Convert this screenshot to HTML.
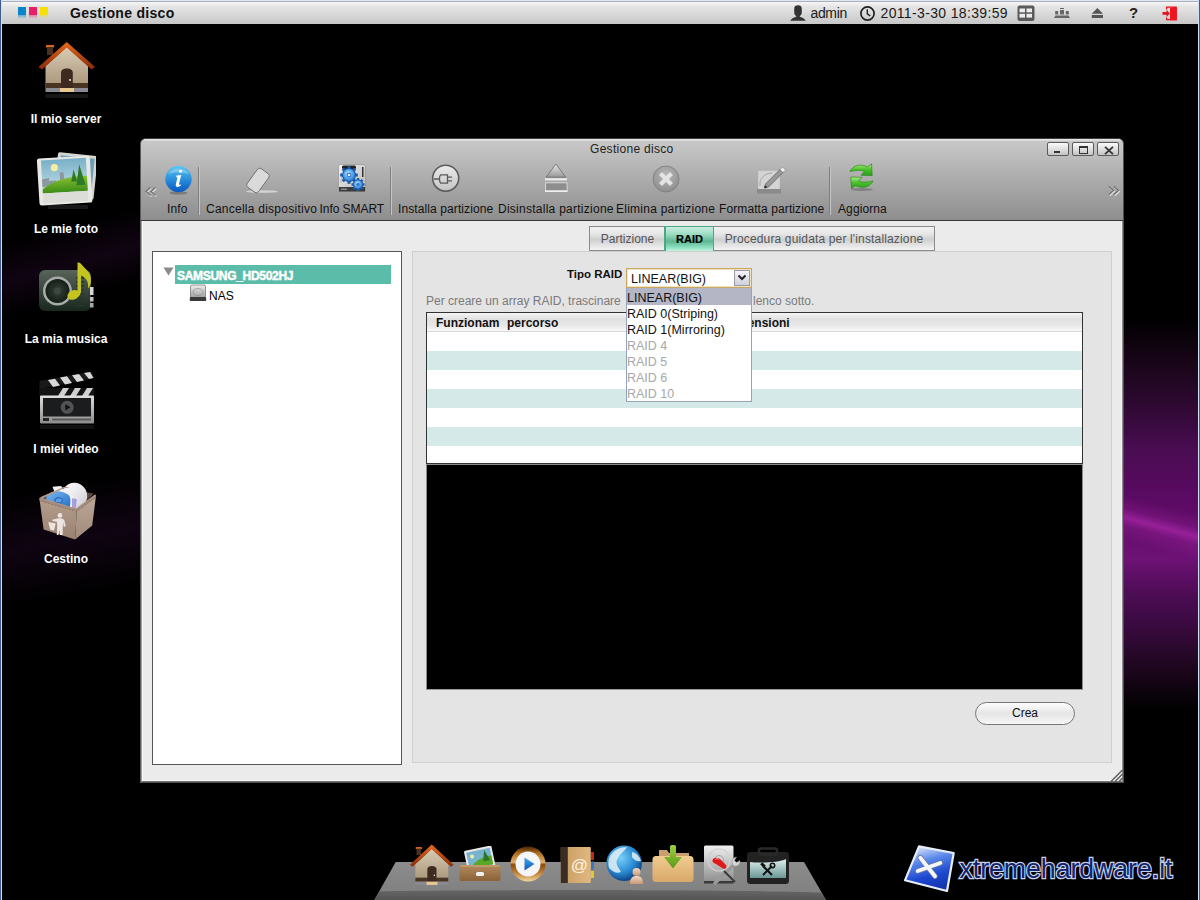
<!DOCTYPE html>
<html><head><meta charset="utf-8">
<style>
*{margin:0;padding:0;box-sizing:border-box}
html,body{width:1200px;height:900px;overflow:hidden;background:#000;font-family:"Liberation Sans",sans-serif}
.a{position:absolute}
#bg{left:0;top:0;width:1200px;height:900px;background:#000}
#frameL{left:0;top:0;width:1px;height:900px;background:#3b5d8f}
#frameL2{left:1px;top:0;width:1px;height:900px;background:#cfe0f3}
#frameR{left:1199px;top:0;width:1px;height:900px;background:#3b5d8f}
#frameR2{left:1198px;top:0;width:1px;height:900px;background:#cfe0f3}
#topbar{left:2px;top:0;width:1196px;height:24px;background:linear-gradient(#dfe7f2 0,#dfe7f2 1px,#a9b0ba 1px,#a9b0ba 2px,#f6f6f6 2px,#e4e4e4 7px,#d2d2d2 18px,#c6c6c6 24px)}
#topline{left:2px;top:1px;width:1196px;height:1px;background:#b8bcc4}
.lbl{color:#fff;font-weight:bold;font-size:12px;text-align:center;width:132px;left:0}
.wbtn{width:22px;height:14px;border:1px solid #5a5a5a;border-radius:2px;background:linear-gradient(#fafafa,#e0e0e0 50%,#c4c4c4)}
.sep{top:167px;height:48px;background:#7e7e7e;border-right:1px solid #c6c6c6;width:2px}
.trow{left:427px;width:655px;height:19px;background:#d5e9e9}
.dd{left:627px;font-size:12.5px;white-space:nowrap}
.tb{font-size:12px;color:#111;white-space:nowrap;top:202px !important;letter-spacing:0.1px}
</style></head><body>
<div class="a" id="bg"></div>
<div class="a" style="left:1123px;top:300px;width:75px;height:440px;background:linear-gradient(#000 0,#000 16px,#1c061c 70px,#360a3c 120px,#4a0c52 150px,#580a60 190px,#620c6a 222px,#6e1276 258px,#5c0e64 278px,#4c0c54 295px,#360a3c 330px,#1c061c 370px,#000 410px)"></div>
<div class="a" style="left:1112px;top:492px;width:110px;height:44px;transform:rotate(15deg);transform-origin:0 50%;background:linear-gradient(rgba(160,36,160,0) 0,rgba(160,36,160,0.25) 30%,rgba(172,40,170,0.7) 50%,rgba(160,36,160,0.3) 68%,rgba(160,36,160,0) 100%)"></div>
<div class="a" style="left:2px;top:180px;width:140px;height:140px;background:linear-gradient(165deg,rgba(40,10,40,0) 35%,rgba(40,10,45,0.4) 58%,rgba(40,10,40,0) 78%)"></div>
<div class="a" style="left:2px;top:480px;width:140px;height:120px;background:linear-gradient(170deg,rgba(30,8,30,0) 10%,rgba(30,8,35,0.5) 50%,rgba(30,8,30,0) 90%)"></div>

<div class="a" id="topbar"></div>
<div class="a" id="frameL"></div><div class="a" id="frameL2"></div>
<div class="a" id="frameR"></div><div class="a" id="frameR2"></div>

<!-- top bar -->
<div class="a" style="left:18px;top:7px;width:8px;height:8px;background:#0a86c8"></div>
<div class="a" style="left:29px;top:7px;width:8px;height:8px;background:#e8206a"></div>
<div class="a" style="left:40px;top:7px;width:8px;height:8px;background:#f6e000"></div>
<div class="a" style="left:18px;top:15px;width:8px;height:4px;background:linear-gradient(rgba(10,134,200,0.55),rgba(10,134,200,0))"></div>
<div class="a" style="left:29px;top:15px;width:8px;height:4px;background:linear-gradient(rgba(232,32,106,0.45),rgba(232,32,106,0))"></div>
<div class="a" style="left:40px;top:15px;width:8px;height:4px;background:linear-gradient(rgba(246,224,0,0.45),rgba(246,224,0,0))"></div>
<div class="a" style="left:70px;top:5px;font-size:14px;font-weight:bold;letter-spacing:0.3px;color:#111">Gestione disco</div>
<svg class="a" style="left:789px;top:4px" width="18" height="18" viewBox="0 0 18 18"><path d="M5.2 5 C5.2 2.2 6.6 1.2 9 1.2 C11.4 1.2 12.8 2.2 12.8 5 L12.8 8.5 C12.8 10.5 11.6 11.6 10.8 12 L10.8 12.8 C13.5 13.6 15.8 14.8 16.8 16.8 L1.2 16.8 C2.2 14.8 4.5 13.6 7.2 12.8 L7.2 12 C6.4 11.6 5.2 10.5 5.2 8.5 Z" fill="#333"/></svg>
<div class="a" style="left:810.5px;top:5px;font-size:14px;letter-spacing:-0.35px;color:#1a1a1a">admin</div>
<svg class="a" style="left:859px;top:5px" width="17" height="17" viewBox="0 0 17 17"><circle cx="8.5" cy="8.5" r="6.6" fill="none" stroke="#222" stroke-width="1.7"/><path d="M8.3 4.2 L8.3 8.8 L11.3 11" fill="none" stroke="#222" stroke-width="1.4"/></svg>
<div class="a" style="left:880.5px;top:5px;font-size:14px;color:#1a1a1a;letter-spacing:0.35px">2011-3-30 18:39:59</div>
<svg class="a" style="left:1017px;top:5px" width="18" height="17" viewBox="0 0 18 17"><rect x="0.5" y="0.5" width="17" height="15.5" rx="2" fill="#5a5a5a"/><rect x="2.5" y="3.5" width="5.5" height="3.8" fill="#ececec"/><rect x="9.5" y="3.5" width="5.5" height="3.8" fill="#ececec"/><rect x="2.5" y="8.8" width="5.5" height="3.8" fill="#ececec"/><rect x="9.5" y="8.8" width="5.5" height="3.8" fill="#ececec"/></svg>
<svg class="a" style="left:1053px;top:7px" width="18" height="12" viewBox="0 0 18 12"><rect x="7" y="1" width="4" height="1" fill="#666"/><rect x="7" y="3" width="4" height="4.5" fill="#666"/><rect x="2.2" y="4" width="3" height="3.5" fill="#666"/><rect x="12.8" y="4" width="3" height="3.5" fill="#666"/><path d="M2.5 8.5 L15.5 8.5 L17 11 L1 11 Z" fill="#666"/></svg>
<svg class="a" style="left:1091px;top:7px" width="13" height="12" viewBox="0 0 13 12"><path d="M6.4 1 L12 6.8 L0.8 6.8 Z" fill="#555"/><rect x="0.8" y="8" width="11.2" height="3" fill="#555"/></svg>
<div class="a" style="left:1129px;top:4px;font-size:15px;font-weight:bold;color:#222">?</div>
<svg class="a" style="left:1162px;top:6px" width="16" height="15" viewBox="0 0 16 15"><path d="M4 0.5 L14.8 0.5 L14.8 14.3 L4 14.3 L4 11.5 L5.2 11.5 L5.2 13 L8 13 L8 4 L12 1.8 L5.2 1.8 L5.2 3.5 L4 3.5 Z" fill="#e3141c"/><rect x="8" y="1.5" width="6.8" height="12.8" fill="#ee1520"/><path d="M0.5 6 L4.5 6 L4.5 3.8 L7.8 7.4 L4.5 11 L4.5 8.8 L0.5 8.8 Z" fill="#e3141c"/></svg>

<!-- window -->
<div class="a" id="win" style="left:140px;top:138px;width:984px;height:645px;background:#ebebeb;border:1px solid #505050;border-left-color:#5a5a5a;border-top-color:#3a3a3a;border-radius:6px 6px 0 0;overflow:hidden;box-shadow:inset 1px 0 #a0a0a0,inset -1px 0 #8a8a8a,inset 0 -1px #747474,inset 2px 0 #f8f8f8,inset -2px 0 #f4f4f4,inset 0 -2px #f8f8f8">
  <div class="a" style="left:0;top:0;width:982px;height:82px;background:linear-gradient(#e6e6e6 0,#e6e6e6 1px,#c8c8c8 2px,#8e8e8e 100%);border-bottom:1px solid #3a3a3a"></div>
</div>
<div class="a" style="left:590px;top:142px;font-size:12px;color:#222;letter-spacing:0.3px">Gestione disco</div>


<!-- title buttons -->
<div class="a wbtn" style="left:1047px;top:142px"><div class="a" style="left:6px;top:8px;width:6px;height:2px;background:#333"></div></div>
<div class="a wbtn" style="left:1072px;top:142px"><div class="a" style="left:6px;top:2.5px;width:8.5px;height:8px;border:1.3px solid #333;border-top-width:2px"></div></div>
<div class="a wbtn" style="left:1097px;top:142px"><svg class="a" style="left:5.5px;top:2.5px" width="10" height="9" viewBox="0 0 10 9"><path d="M1 0.8 L9 8.2 M9 0.8 L1 8.2" stroke="#333" stroke-width="1.8"/></svg></div>
<!-- arrows -->
<svg class="a" style="left:144px;top:186px" width="14" height="11" viewBox="0 0 14 11"><path d="M6.5 1.5 L2 5.5 L6.5 9.5 M11.5 1.5 L7 5.5 L11.5 9.5" fill="none" stroke="#e8e8e8" stroke-width="1.4" transform="translate(0.7 0.9)"/><path d="M6.5 1.5 L2 5.5 L6.5 9.5 M11.5 1.5 L7 5.5 L11.5 9.5" fill="none" stroke="#6e6e6e" stroke-width="1.2"/></svg>
<svg class="a" style="left:1107px;top:185px" width="14" height="11" viewBox="0 0 14 11"><path d="M2 1.5 L6.5 5.5 L2 9.5 M7 1.5 L11.5 5.5 L7 9.5" fill="none" stroke="#e8e8e8" stroke-width="1.4" transform="translate(0.7 0.9)"/><path d="M2 1.5 L6.5 5.5 L2 9.5 M7 1.5 L11.5 5.5 L7 9.5" fill="none" stroke="#6e6e6e" stroke-width="1.2"/></svg>
<!-- separators -->
<div class="a sep" style="left:198px"></div><div class="a sep" style="left:390px"></div><div class="a sep" style="left:829px"></div>
<!-- toolbar icons -->
<svg class="a" style="left:163px;top:164px" width="32" height="32" viewBox="0 0 32 32">
<defs><linearGradient id="ib" x1="0" y1="0" x2="0" y2="1"><stop offset="0" stop-color="#60c8f4"/><stop offset="0.5" stop-color="#2a90dc"/><stop offset="1" stop-color="#0a58c0"/></linearGradient></defs>
<ellipse cx="15.5" cy="29" rx="9" ry="1.6" fill="#555" opacity="0.5"/>
<circle cx="15.5" cy="15" r="13.2" fill="url(#ib)"/><path d="M5 10 C8 3 23 3 26 10 C20 8 11 8 5 10Z" fill="#fff" opacity="0.25"/>
<circle cx="17.5" cy="7.2" r="1.5" fill="#fff"/><path d="M13.5 11.5 L18.2 11 L16 20 C15.8 21 16.6 21.2 18 20 L17.6 21.8 C15 23.6 12.2 23.2 12.8 20.5 L14.5 13.2 L13.2 13.2 Z" fill="#fff"/>
</svg>
<svg class="a" style="left:242px;top:162px" width="40" height="34" viewBox="0 0 40 34">
<ellipse cx="20" cy="29.5" rx="16" ry="1.3" fill="#e8e8e8" opacity="0.7"/>
<rect x="9" y="7" width="14" height="23" rx="3" transform="rotate(36 16 18.5)" fill="#dadada" stroke="#707070" stroke-width="0.9"/>
</svg>
<svg class="a" style="left:337px;top:163px" width="30" height="30" viewBox="0 0 30 30">
<defs><linearGradient id="sm" x1="0" y1="0" x2="1" y2="1"><stop offset="0" stop-color="#f4f4f4"/><stop offset="1" stop-color="#b4b4b4"/></linearGradient>
<radialGradient id="gb" cx="0.45" cy="0.4" r="0.6"><stop offset="0" stop-color="#e8f6ff"/><stop offset="0.45" stop-color="#68b8f8"/><stop offset="1" stop-color="#2a78d0"/></radialGradient></defs>
<rect x="1.5" y="1.5" width="27" height="27" rx="2" fill="url(#sm)" stroke="#8a8a8a" stroke-width="0.6"/><path d="M4 20 C3 12 9 6 17 6" fill="none" stroke="#999" stroke-width="0.6"/><rect x="5" y="2.5" width="14" height="3.5" rx="1.5" fill="#222"/><rect x="2" y="24" width="26" height="4.5" fill="#3c3c3c"/><rect x="4" y="25.5" width="6" height="1.5" fill="#8a8a8a"/>
<rect x="25" y="4" width="1.5" height="10" fill="#333"/>
<g transform="translate(12 12)"><g fill="#1c5aa8"><circle r="7"/><rect x="-1.5" y="-8.8" width="3" height="17.6"/><rect x="-8.8" y="-1.5" width="17.6" height="3"/><rect x="-1.5" y="-8.8" width="3" height="17.6" transform="rotate(45)"/><rect x="-1.5" y="-8.8" width="3" height="17.6" transform="rotate(-45)"/></g><circle r="6" fill="url(#gb)"/><circle r="2.4" fill="#3a78c0"/><circle r="1.3" fill="#d8ecfa"/></g>
<g transform="translate(21 21.5)"><g fill="#1c5aa8"><circle r="5.2"/><rect x="-1.2" y="-6.5" width="2.4" height="13"/><rect x="-6.5" y="-1.2" width="13" height="2.4"/><rect x="-1.2" y="-6.5" width="2.4" height="13" transform="rotate(45)"/><rect x="-1.2" y="-6.5" width="2.4" height="13" transform="rotate(-45)"/></g><circle r="4.3" fill="url(#gb)"/><circle r="1.7" fill="#3a78c0"/></g>
</svg>
<svg class="a" style="left:430px;top:162px" width="32" height="32" viewBox="0 0 32 32">
<defs><linearGradient id="pl" x1="0" y1="0" x2="0" y2="1"><stop offset="0" stop-color="#ececec"/><stop offset="1" stop-color="#c4c4c4"/></linearGradient></defs>
<circle cx="15.7" cy="16.2" r="13" fill="url(#pl)" stroke="#5c5c5c" stroke-width="1.6"/>
<path d="M4 17 L10 17 M17.5 12.8 L10.8 12.8 C9 14 9 20 10.8 21.2 L17.5 21.2 Z M17.5 15.2 L22 15.2 M17.5 18.8 L22 18.8" fill="none" stroke="#5a5a5a" stroke-width="1.3"/>
</svg>
<svg class="a" style="left:543px;top:162px" width="27" height="32" viewBox="0 0 27 32">
<defs><linearGradient id="ej" x1="0" y1="0" x2="0" y2="1"><stop offset="0" stop-color="#e8e8e8"/><stop offset="1" stop-color="#989898"/></linearGradient></defs>
<path d="M12.8 2 L22.8 15.2 L3.2 15.2 Z" fill="url(#ej)" stroke="#6a6a6a" stroke-width="0.8"/>
<rect x="2" y="16.2" width="22" height="2.2" fill="#ececec"/>
<rect x="2.5" y="20.8" width="21.6" height="8" fill="#8e8e8e" stroke="#dedede" stroke-width="0.9"/><rect x="2" y="28.6" width="22.5" height="1.4" fill="#efefef"/>
</svg>
<svg class="a" style="left:651px;top:164px" width="30" height="30" viewBox="0 0 30 30">
<defs><radialGradient id="xg" cx="0.5" cy="0.35" r="0.65"><stop offset="0" stop-color="#b8b8b8"/><stop offset="1" stop-color="#8e8e8e"/></radialGradient></defs>
<circle cx="15" cy="15" r="13" fill="url(#xg)" stroke="#7c7c7c" stroke-width="0.8"/>
<path d="M9.5 9.5 L20.5 20.5 M20.5 9.5 L9.5 20.5" stroke="#e4e4e4" stroke-width="4.2"/>
</svg>
<svg class="a" style="left:755px;top:164px" width="34" height="32" viewBox="0 0 34 32">
<rect x="3" y="6.5" width="22" height="19" fill="#d4d4d4" stroke="#b0b0b0" stroke-width="0.5"/><path d="M5 22 C4 14 10 9 17 9" fill="none" stroke="#8a8a8a" stroke-width="0.6"/>
<rect x="2" y="25" width="24" height="4.5" fill="#8a8a8a"/>
<path d="M9.5 24 L10.5 20 L25 5.5 L28 8.5 L13.5 23 Z" fill="#9a9a9a" stroke="#555" stroke-width="0.7"/><path d="M25 5.5 L27.5 3 L30.5 6 L28 8.5 Z" fill="#eeeeee" stroke="#777" stroke-width="0.5"/><circle cx="10.5" cy="23" r="1.3" fill="#333"/>
</svg>
<svg class="a" style="left:847px;top:162px" width="30" height="31" viewBox="0 0 30 31">
<defs><linearGradient id="gr" x1="0" y1="0" x2="0" y2="1"><stop offset="0" stop-color="#a8f088"/><stop offset="0.5" stop-color="#48c028"/><stop offset="1" stop-color="#28a018"/></linearGradient></defs>
<ellipse cx="15" cy="27.5" rx="11" ry="1.5" fill="#555" opacity="0.45"/>
<path d="M3 9.5 C6 3 14 1.5 20.5 5 L24.5 1.8 L25.2 13.5 L14 13.2 L17.5 9.5 C13 7.5 8 8.5 3 9.5 Z" fill="url(#gr)" stroke="#2a8a18" stroke-width="0.7"/>
<path d="M26 19 C23 25.5 15 27 8.5 23.5 L4.5 26.7 L3.8 15 L15 15.3 L11.5 19 C16 21 21 20 26 19 Z" fill="url(#gr)" stroke="#2a8a18" stroke-width="0.7"/>
</svg>

<div class="a tb" style="left:167px;top:201px">Info</div>
<div class="a tb" style="left:206px;top:201px;letter-spacing:0.25px">Cancella dispositivo</div>
<div class="a tb" style="left:319.5px;top:201px;letter-spacing:-0.05px">Info SMART</div>
<div class="a tb" style="left:398px;top:201px">Installa partizione</div>
<div class="a tb" style="left:498px;top:201px;letter-spacing:0.26px">Disinstalla partizione</div>
<div class="a tb" style="left:616px;top:201px;letter-spacing:0.25px">Elimina partizione</div>
<div class="a tb" style="left:719px;top:201px">Formatta partizione</div>
<div class="a tb" style="left:838px;top:201px">Aggiorna</div>

<!-- tree panel -->
<div class="a" style="left:152px;top:251px;width:250px;height:514px;background:#fff;border:1px solid #555"></div>
<div class="a" style="left:175px;top:265px;width:216px;height:19px;background:#5cbcaa"></div>
<div class="a" style="left:177px;top:268.5px;font-size:12px;font-weight:bold;color:#fff;letter-spacing:-0.3px;-webkit-text-stroke:0.45px #fff">SAMSUNG_HD502HJ</div>
<div class="a" style="left:209px;top:289px;font-size:12px;color:#000">NAS</div>


<svg class="a" style="left:163px;top:267px" width="11" height="9" viewBox="0 0 11 9"><path d="M0.5 0.5 L10.5 0.5 L5.5 8.5 Z" fill="#8a8a8a"/></svg>
<svg class="a" style="left:189px;top:284px" width="18" height="18" viewBox="0 0 18 18"><defs><linearGradient id="hd" x1="0" y1="0" x2="0" y2="1"><stop offset="0" stop-color="#f0f0f0"/><stop offset="1" stop-color="#a0a0a0"/></linearGradient></defs><rect x="1.5" y="1" width="15" height="12.5" rx="1.5" fill="url(#hd)" stroke="#6a6a6a" stroke-width="0.7"/><ellipse cx="9" cy="8" rx="5" ry="3.5" fill="none" stroke="#888" stroke-width="0.6"/><rect x="0.8" y="13" width="16.4" height="4" rx="0.8" fill="#3a3a3a"/></svg>

<!-- right panel -->
<div class="a" style="left:412px;top:251px;width:700px;height:512px;background:#e4e4e4;border:1px solid #d0d0d0"></div>


<!-- tabs -->
<div class="a" style="left:589px;top:226px;width:76px;height:25px;border:1px solid #8a8a8a;border-right:none;background:linear-gradient(#f2f2f2 0,#e6e6e6 30%,#cfcfcf 55%,#e8e8e8 85%,#f4f4f4);font-size:12px;color:#555;text-align:center;line-height:25px;letter-spacing:0px">Partizione</div>
<div class="a" style="left:664px;top:226px;width:51px;height:25px;border:2px solid #4aa888;border-top-width:1.5px;border-bottom:none;background:linear-gradient(#c8eee0 0,#9cdcc4 30%,#5cb894 60%,#8ee0c0 85%,#c0f4e0);font-size:11px;font-weight:bold;color:#000;text-align:center;line-height:25px;-webkit-text-stroke:0.2px #000">RAID</div>
<div class="a" style="left:714px;top:226px;width:221px;height:25px;border:1px solid #8a8a8a;border-left:none;background:linear-gradient(#f2f2f2 0,#e6e6e6 30%,#cfcfcf 55%,#e8e8e8 85%,#f4f4f4);font-size:12px;color:#555;text-align:center;line-height:25px;letter-spacing:0.15px">Procedura guidata per l'installazione</div>

<!-- Tipo RAID / select -->
<div class="a" style="left:567px;top:268px;font-size:11.5px;font-weight:bold;color:#111">Tipo RAID</div>
<div class="a" style="left:426px;top:294px;font-size:12px;color:#7a7a7a">Per creare un array RAID, trascinare</div>
<div class="a" style="left:753px;top:294px;font-size:12px;color:#7a7a7a">lenco sotto.</div>

<!-- table -->
<div class="a" style="left:426px;top:312px;width:657px;height:152px;background:#fff;border:1px solid #333"></div>

<div class="a" style="left:427px;top:313px;width:655px;height:19px;background:linear-gradient(#f4f4f4 0,#e0e0e0 35%,#e8e8e8 70%,#fafafa);border-bottom:1px solid #d8d8d8"></div>
<div class="a" style="left:436px;top:316px;font-size:12px;font-weight:bold;color:#111">Funzionam</div>
<div class="a" style="left:507px;top:316px;font-size:12px;font-weight:bold;color:#111">percorso</div>
<div class="a" style="left:725px;top:316px;font-size:12px;font-weight:bold;color:#111">Dimensioni</div>
<div class="a trow" style="top:351px"></div><div class="a trow" style="top:389px"></div><div class="a trow" style="top:427px"></div>
<div class="a" style="left:426px;top:464px;width:657px;height:226px;background:#000;border:1px solid #8c8c8c;border-bottom-color:#9a9a9a"></div>


<!-- select + dropdown -->
<div class="a" style="left:626px;top:268px;width:126px;height:20px;border:1px solid #c8a860;box-shadow:inset 0 0 0 1px #f0e4c0;background:#fff"></div>
<div class="a" style="left:631px;top:272px;font-size:12.5px;color:#111">LINEAR(BIG)</div>
<div class="a" style="left:734px;top:270px;width:16px;height:16px;border:1px solid #9a9aa8;background:linear-gradient(#f4f4fa,#d0d0dc)"></div>
<svg class="a" style="left:737px;top:274px" width="10" height="8" viewBox="0 0 10 8"><path d="M1.5 1.5 L5 5 L8.5 1.5" fill="none" stroke="#222" stroke-width="2"/></svg>
<div class="a" style="left:626px;top:288px;width:126px;height:114px;background:#fff;border:1px solid #94a4bc;border-top:none"></div>
<div class="a" style="left:627px;top:288px;width:124px;height:17px;background:#b4b6c6"></div>
<div class="a dd" style="top:291px;color:#111">LINEAR(BIG)</div>
<div class="a dd" style="top:307px;color:#111">RAID 0(Striping)</div>
<div class="a dd" style="top:323px;color:#111">RAID 1(Mirroring)</div>
<div class="a dd" style="top:339px;color:#a8a8a8">RAID 4</div>
<div class="a dd" style="top:355px;color:#a8a8a8">RAID 5</div>
<div class="a dd" style="top:371px;color:#a8a8a8">RAID 6</div>
<div class="a dd" style="top:387px;color:#a8a8a8">RAID 10</div>
<!-- resize grip -->
<svg class="a" style="left:1110px;top:769px" width="13" height="13" viewBox="0 0 13 13"><path d="M12.5 1 L1 12.5 M12.5 5 L5 12.5 M12.5 9 L9 12.5" stroke="#5a5a5a" stroke-width="1.4"/></svg>
<!-- Crea -->
<div class="a" style="left:975px;top:702px;width:100px;height:23px;border:1px solid #777;border-radius:12px;background:linear-gradient(#fdfdfd,#e6e6e6 50%,#f6f6f6);font-size:12px;text-align:center;line-height:21px;color:#111">Crea</div>


<!-- desktop icons -->
<svg class="a" style="left:36px;top:40px" width="62" height="62" viewBox="0 0 62 62">
<defs><linearGradient id="hw" x1="0" y1="0" x2="0" y2="1"><stop offset="0" stop-color="#d8cbb4"/><stop offset="1" stop-color="#a89478"/></linearGradient>
<linearGradient id="hr" x1="0" y1="0" x2="0" y2="1"><stop offset="0" stop-color="#e86a1c"/><stop offset="1" stop-color="#8a2a08"/></linearGradient></defs>
<rect x="10" y="5" width="8" height="2.5" fill="#d8641e"/><rect x="11" y="7" width="6" height="8" fill="#4a3022"/>
<g id="houseg"><path d="M9.5 26 L30.7 7 L52 26 L52 48 L9.5 48 Z" fill="url(#hw)"/>
<path d="M2.5 27 L30.7 2 L59 27 L55.5 29.5 L30.7 7.5 L6 29.5 Z" fill="url(#hr)"/>
<rect x="9.5" y="43" width="42.5" height="5" fill="#4a3424"/><path d="M25 48 L25 32.5 C25 27 36.8 27 36.8 32.5 L36.8 48 Z" fill="#3e2a1e"/><circle cx="34" cy="40" r="0.9" fill="#fff"/><rect x="9.5" y="48" width="42.5" height="4" fill="#8a8a92"/><rect x="24" y="48" width="14" height="4" fill="#e8c890"/></g>
<rect x="9.5" y="54" width="42.5" height="4" fill="#1c1c1c" opacity="0.8"/>
</svg>
<svg class="a" style="left:36px;top:148px" width="60" height="62" viewBox="0 0 60 62">
<defs><linearGradient id="sky" x1="0" y1="0" x2="0" y2="1"><stop offset="0" stop-color="#78b0c8"/><stop offset="1" stop-color="#c8e0e8"/></linearGradient>
<linearGradient id="grs" x1="0" y1="0" x2="0" y2="1"><stop offset="0" stop-color="#88c030"/><stop offset="1" stop-color="#3c8c18"/></linearGradient></defs>
<g transform="rotate(6 40 26)"><rect x="20" y="6" width="40" height="44" rx="2" fill="#d4d4d0"/><rect x="23" y="9" width="34" height="30" fill="#6aa0b8"/></g>
<g transform="rotate(-3.5 30 30)"><rect x="2" y="9" width="53" height="47" rx="2.5" fill="#e8e8e4"/><rect x="6" y="11" width="45" height="33" fill="url(#sky)"/>
<circle cx="19" cy="19" r="3.6" fill="#f4eca0"/>
<path d="M6 30 L13 29 L13 32 L20 32 L20 34 L24 34 L24 24 L28 24 L28 35 L6 38 Z" fill="#8a98a0"/>
<path d="M6 40 C14 34 28 28 51 29 L51 44 L6 44 Z" fill="url(#grs)"/>
<path d="M44 17 L49 38 L40 38 Z" fill="#2c7a28"/><path d="M38 22 L41 34 L35 34 Z" fill="#2c7a28"/>
<rect x="6" y="44" width="45" height="10" fill="#dcdcd8"/></g>
<rect x="12" y="57" width="40" height="4" fill="#444" opacity="0.35"/>
</svg>
<svg class="a" style="left:36px;top:260px" width="60" height="56" viewBox="0 0 60 56">
<defs><linearGradient id="rad" x1="0" y1="0" x2="0" y2="1"><stop offset="0" stop-color="#58645a"/><stop offset="1" stop-color="#18281e"/></linearGradient>
<radialGradient id="spk"><stop offset="0" stop-color="#39443c"/><stop offset="1" stop-color="#141c16"/></radialGradient></defs>
<rect x="3" y="10" width="52" height="41" rx="6" fill="url(#rad)"/>
<circle cx="21.5" cy="31" r="14.5" fill="#a8aca8"/><circle cx="21.5" cy="31" r="12" fill="url(#spk)"/><circle cx="21.5" cy="31" r="3.4" fill="#3a4a3e"/>
<g fill="#2a342c"><rect x="40" y="17" width="8" height="1.5"/><rect x="40" y="21" width="8" height="1.5"/><rect x="40" y="25" width="8" height="1.5"/><rect x="40" y="29" width="8" height="1.5"/><rect x="40" y="33" width="8" height="1.5"/><rect x="40" y="37" width="8" height="1.5"/><rect x="40" y="41" width="8" height="1.5"/><rect x="40" y="45" width="8" height="1.5"/></g>
<rect x="54" y="27" width="3.5" height="8" fill="#d8d8d8"/><rect x="54" y="37" width="3.5" height="4.5" fill="#c0c0c0"/><rect x="54" y="43" width="3.5" height="4.5" fill="#a8a8a8"/>
<path d="M41.5 2.5 C44 2 45 3.5 46.5 5.5 C49 9 55 12 55 20 C55 25 53.5 27 52 28.5 C53 22 50 17.5 45 15.5 L45 31 C45 37 38 41 34 39.5 C30 38 31 33 35 31 C38 29.5 40 29.8 41.5 30.5 Z" fill="#c4c41e"/>
</svg>
<svg class="a" style="left:38px;top:370px" width="58" height="60" viewBox="0 0 58 60">
<defs><linearGradient id="vfr" x1="0" y1="0" x2="0" y2="1"><stop offset="0" stop-color="#e0e0e0"/><stop offset="1" stop-color="#8c8c8c"/></linearGradient></defs>
<path d="M1.5 11 L54 1.5 L56 8 L1.5 19 Z" fill="#1a1a1a"/>
<g fill="#d8d8d8"><path d="M10 10 L17 8.8 L22 15.5 L15 17 Z"/><path d="M22 7.5 L29 6.2 L34 13 L27 14.5 Z"/><path d="M34 5.3 L41 4 L46 10.5 L39 12 Z"/><path d="M46 3 L52 2 L55.5 8 L51 9 Z"/></g>
<rect x="1.5" y="18" width="54.5" height="8" fill="#141414"/>
<g fill="#d0d0d0"><path d="M20 26 L25 18 L31 18 L26 26 Z"/><path d="M32 26 L37 18 L43 18 L38 26 Z"/><path d="M44 26 L49 18 L55 18 L50 26 Z"/></g>
<rect x="2" y="25.5" width="54" height="28" rx="1" fill="url(#vfr)"/><rect x="5" y="28" width="48" height="18.5" fill="#1a1c1e"/>
<circle cx="29.2" cy="37.3" r="6.5" fill="#505254"/><path d="M27.3 34 L32.5 37.3 L27.3 40.6 Z" fill="#111"/>
<rect x="5" y="48" width="6" height="3" fill="#222"/><rect x="14" y="48.5" width="39" height="2" fill="#5a5a5a"/>
<rect x="2" y="55" width="54" height="4" fill="#2a2a2a" opacity="0.4"/>
</svg>
<svg class="a" style="left:30px;top:475px" width="70" height="70" viewBox="0 0 900 900">
<defs><linearGradient id="trf" x1="0" y1="0" x2="0" y2="1"><stop offset="0" stop-color="#b49c8c"/><stop offset="1" stop-color="#9a8272"/></linearGradient>
<linearGradient id="trr" x1="0" y1="0" x2="0" y2="1"><stop offset="0" stop-color="#bca898"/><stop offset="1" stop-color="#a08a7a"/></linearGradient>
<linearGradient id="dsk" x1="0" y1="0" x2="1" y2="1"><stop offset="0" stop-color="#ffffff"/><stop offset="0.5" stop-color="#e8e8ec"/><stop offset="1" stop-color="#c8c8d0"/></linearGradient>
<linearGradient id="bdsk" x1="0" y1="0" x2="1" y2="1"><stop offset="0" stop-color="#78b8f0"/><stop offset="1" stop-color="#2870c8"/></linearGradient></defs>
<path d="M150 300 L440 160 L820 240 L600 440 Z" fill="#5a4a42"/>
<ellipse cx="570" cy="270" rx="165" ry="170" fill="url(#dsk)"/>
<path d="M290 150 L400 140 L470 240 L330 260 Z" fill="#f4f4f4"/>
<path d="M420 200 C520 190 580 260 590 420 L470 430 C460 330 420 250 420 200 Z" fill="#f0f0f4"/>
<path d="M540 300 L600 310 L590 430 L540 430 Z" fill="#8a7ad0" opacity="0.7"/>
<path d="M210 290 C240 200 400 180 500 260 C530 290 520 380 510 420 L250 360 C220 340 200 320 210 290 Z" fill="url(#bdsk)"/>
<path d="M320 330 C330 280 400 280 420 320 L400 360 L330 350 Z" fill="#5aa0e8" stroke="#2a68b8" stroke-width="14"/>
<path d="M120 300 L150 275 L440 150 L520 160 L440 170 L165 300 L590 430 L820 260 L845 250 L845 290 L600 470 L125 330 Z" fill="#b09a8a"/>
<path d="M125 330 L600 470 L580 830 L175 700 Z" fill="url(#trf)"/>
<path d="M600 470 L845 290 L800 650 L580 830 Z" fill="url(#trr)"/>
<path d="M120 300 L595 440 L845 255 L845 290 L600 470 L125 330 Z" fill="#a28a7a"/>
<g fill="#ece4e0"><circle cx="385" cy="520" r="30"/><path d="M350 560 C380 550 420 555 440 575 L460 660 L435 665 L425 610 L420 700 L420 770 L385 770 L380 700 L365 770 L345 770 L350 640 L345 600 L290 590 L285 575 Z"/><path d="M235 605 L330 625 L310 715 L260 705 Z"/></g>
</svg>

<!-- desktop labels -->
<div class="a lbl" style="top:112px">Il mio server</div>
<div class="a lbl" style="top:222px">Le mie foto</div>
<div class="a lbl" style="top:332px">La mia musica</div>
<div class="a lbl" style="top:442px">I miei video</div>
<div class="a lbl" style="top:552px">Cestino</div>


<!-- dock -->
<svg class="a" style="left:370px;top:855px" width="460" height="45" viewBox="0 0 460 45">
<defs><linearGradient id="shelf" x1="0" y1="0" x2="0" y2="1"><stop offset="0" stop-color="#8c8c8c"/><stop offset="1" stop-color="#7e7e7e"/></linearGradient>
<linearGradient id="front" x1="0" y1="0" x2="0" y2="1"><stop offset="0" stop-color="#666"/><stop offset="1" stop-color="#555"/></linearGradient></defs>
<path d="M25.7 7 L434 7 L456 45 L4.3 45 Z" fill="url(#shelf)"/>
<path d="M9.5 36.3 C80 34.5 380 34.5 451 37.7 L456 45 L4.3 45 Z" fill="url(#front)"/>
</svg>
<svg class="a" style="left:408px;top:843px" width="48" height="50" viewBox="0 0 62 62" preserveAspectRatio="none">
<rect x="10" y="5" width="8" height="2.5" fill="#d8641e"/><rect x="11" y="7" width="6" height="8" fill="#4a3022"/><use href="#houseg"/>
</svg>

<svg class="a" style="left:456px;top:846px" width="48" height="38" viewBox="0 0 48 38">
<defs><linearGradient id="drw" x1="0" y1="0" x2="0" y2="1"><stop offset="0" stop-color="#b48a5c"/><stop offset="1" stop-color="#8a6238"/></linearGradient></defs>
<g transform="rotate(-12 24 14)"><rect x="10" y="2" width="28" height="22" rx="1.5" fill="#e8e8e8"/><rect x="12" y="4" width="24" height="17" fill="#78b4d0"/><path d="M12 21 C18 14 28 11 36 12 L36 21 Z" fill="#58a828"/><path d="M30 5 L34 16 L27 16 Z" fill="#2c7428"/><circle cx="17" cy="9" r="2" fill="#f0eca0"/></g>
<path d="M3.5 19 L44.5 19 L44.5 33 C44.5 34 44 35 42.5 35 L5.5 35 C4 35 3.5 34 3.5 33 Z" fill="url(#drw)"/>
<path d="M3.5 19 L44.5 19 L42 21 L6 21 Z" fill="#c09a6a"/>
<rect x="20" y="26" width="8" height="4" rx="1.5" fill="#f2f2f2"/>
</svg>
<svg class="a" style="left:509px;top:845px" width="38" height="38" viewBox="0 0 38 38">
<defs><linearGradient id="gold" x1="0" y1="0" x2="0" y2="1"><stop offset="0" stop-color="#4a2404"/><stop offset="0.2" stop-color="#b07020"/><stop offset="0.45" stop-color="#e0b070"/><stop offset="0.52" stop-color="#8a4a08"/><stop offset="0.8" stop-color="#c89048"/><stop offset="1" stop-color="#f0d8a0"/></linearGradient>
<linearGradient id="plb" x1="0" y1="0" x2="0" y2="1"><stop offset="0" stop-color="#4aa8f0"/><stop offset="1" stop-color="#0a58b0"/></linearGradient></defs>
<circle cx="19" cy="19" r="17.5" fill="url(#gold)"/><circle cx="19" cy="19" r="12.5" fill="#f4f6f8"/><path d="M15.5 12.5 L25.5 19 L15.5 25.5 Z" fill="url(#plb)"/>
</svg>
<svg class="a" style="left:560px;top:846px" width="36" height="38" viewBox="0 0 36 38">
<defs><linearGradient id="bk" x1="0" y1="0" x2="1" y2="0"><stop offset="0" stop-color="#c89c60"/><stop offset="1" stop-color="#e0b880"/></linearGradient></defs>
<rect x="0.8" y="1" width="30" height="36" rx="1" fill="url(#bk)"/><rect x="0.8" y="1" width="7" height="36" fill="#3a2e24"/>
<rect x="31" y="6" width="3" height="8" fill="#c02818"/><rect x="31" y="15.5" width="3" height="8" fill="#3878c0"/><rect x="31" y="25" width="3" height="7" fill="#e8c828"/>
<text x="19.5" y="25" font-family="Liberation Sans" font-size="17" fill="#fff4e0" text-anchor="middle">@</text>
</svg>
<svg class="a" style="left:605px;top:844px" width="42" height="42" viewBox="0 0 42 42">
<defs><radialGradient id="glb" cx="0.4" cy="0.35" r="0.7"><stop offset="0" stop-color="#78d0f8"/><stop offset="0.6" stop-color="#2888d0"/><stop offset="1" stop-color="#0a3878"/></radialGradient>
<linearGradient id="prs" x1="0" y1="0" x2="0" y2="1"><stop offset="0" stop-color="#f4d8c0"/><stop offset="1" stop-color="#c89878"/></linearGradient></defs>
<circle cx="19.2" cy="19.3" r="17.8" fill="url(#glb)"/>
<path d="M5 12 C9 6 15 3 22 3 C20 7 14 10 12 16 C10 20 14 24 16 28 C12 30 8 28 4 24 C3 20 3 16 5 12 Z" fill="#e4eef6" opacity="0.85"/>
<path d="M27 8 C32 9 35 13 36 17 C32 18 29 16 27 13 Z" fill="#e4eef6" opacity="0.85"/>
<circle cx="31.5" cy="28" r="4" fill="url(#prs)"/><path d="M25 40 C25 33 28 32 31.5 32 C35 32 38 33 38 40 Z" fill="url(#prs)"/>
</svg>
<svg class="a" style="left:651px;top:844px" width="44" height="40" viewBox="0 0 44 40">
<defs><linearGradient id="fld" x1="0" y1="0" x2="0" y2="1"><stop offset="0" stop-color="#f0cc90"/><stop offset="1" stop-color="#d8a868"/></linearGradient>
<linearGradient id="arr" x1="0" y1="0" x2="0" y2="1"><stop offset="0" stop-color="#a0d040"/><stop offset="1" stop-color="#5c9818"/></linearGradient></defs>
<path d="M8 6 L16 6 L18 9 L38 9 L38 14 L8 14 Z" fill="#c8a070"/>
<rect x="1.5" y="12" width="41" height="26" rx="3.5" fill="url(#fld)"/>
<path d="M19 2.5 C19 1.5 20 1 22 1 C24 1 25 1.5 25 2.5 L25 13 L31 13 L22 24.5 L13 13 L19 13 Z" fill="url(#arr)"/>
</svg>
<svg class="a" style="left:702px;top:844px" width="40" height="42" viewBox="0 0 40 42">
<defs><linearGradient id="hdd2" x1="0" y1="0" x2="0" y2="1"><stop offset="0" stop-color="#f0f0f0"/><stop offset="1" stop-color="#909090"/></linearGradient></defs>
<rect x="2" y="1.5" width="29.5" height="36" rx="1.5" fill="url(#hdd2)"/><circle cx="17" cy="16" r="11" fill="none" stroke="#d0d0d0" stroke-width="1.2"/><circle cx="17" cy="16" r="4.5" fill="none" stroke="#a8a8a8" stroke-width="1"/>
<rect x="2" y="37" width="29.5" height="2.5" fill="#3a3a3a"/>
<path d="M13 39 L33 20" stroke="#9a9a9a" stroke-width="3.6" stroke-linecap="round"/><path d="M31.5 21.5 C28.5 18.5 30 13.5 34.5 13 L32.5 16.5 L34.5 18.5 L38 16.5 C38.5 21 34.5 23.5 31.5 21.5 Z" fill="#d4d4d4" stroke="#8a8a8a" stroke-width="0.5"/>
<path d="M22 27 L33 38" stroke="#3a3a3a" stroke-width="2"/>
<path d="M10.5 16 C12 13 16 13 19 16 L24 21 C25.5 23 23.5 26 21 24.5 L14 20 C11.5 19 10 18 10.5 16 Z" fill="#e01818"/><path d="M13 15.5 C14 14.5 16 14.5 17 15.5" stroke="#ff8080" stroke-width="1" fill="none"/>
</svg>
<svg class="a" style="left:745px;top:847px" width="46" height="38" viewBox="0 0 46 38">
<defs><linearGradient id="tbx" x1="0" y1="0" x2="0" y2="1"><stop offset="0" stop-color="#dff0ee"/><stop offset="1" stop-color="#6a9894"/></linearGradient></defs>
<rect x="2" y="5" width="42" height="32" rx="3.5" fill="#222"/><rect x="14" y="1.5" width="18" height="6" rx="2" fill="none" stroke="#2a2a2a" stroke-width="2.5"/>
<path d="M5 15 C12 16 34 16 41 12 L41 31 L5 31 Z" fill="url(#tbx)"/>
<path d="M18 19 L27 28" stroke="#111" stroke-width="2.2"/><path d="M27 19 L18 28" stroke="#111" stroke-width="1.8"/><rect x="15.5" y="16.5" width="5" height="3" transform="rotate(45 18 18)" fill="#111"/><circle cx="27.5" cy="18.5" r="2.2" fill="none" stroke="#111" stroke-width="1.5"/>
</svg>
<!-- logo -->
<svg class="a" style="left:900px;top:840px" width="280" height="58" viewBox="0 0 280 58">
<defs><linearGradient id="lgb" x1="0.2" y1="0" x2="0.5" y2="1"><stop offset="0" stop-color="#e8eefa"/><stop offset="0.35" stop-color="#5a88ea"/><stop offset="0.7" stop-color="#1c48d0"/><stop offset="1" stop-color="#1434b0"/></linearGradient></defs>
<path d="M19 6.3 L53.7 13 L47 51 L5 40.3 Z" fill="url(#lgb)" stroke="#e8eef8" stroke-width="2.2" stroke-linejoin="round"/>
<path d="M20.3 17.7 L35 36.3 M40.3 23 L17.7 31" stroke="#6a7aa0" stroke-width="5.5" stroke-linecap="round"/>
<path d="M20.3 17.7 L35 36.3 M40.3 23 L17.7 31" stroke="#f4f6fa" stroke-width="3.8" stroke-linecap="round"/>
<text x="59.5" y="38" font-family="Liberation Sans" font-size="27.5" fill="#12246e" stroke="#c8d2e8" stroke-width="2.4" paint-order="stroke" textLength="213" lengthAdjust="spacingAndGlyphs">xtremehardware.it</text>

</svg>

</body></html>
